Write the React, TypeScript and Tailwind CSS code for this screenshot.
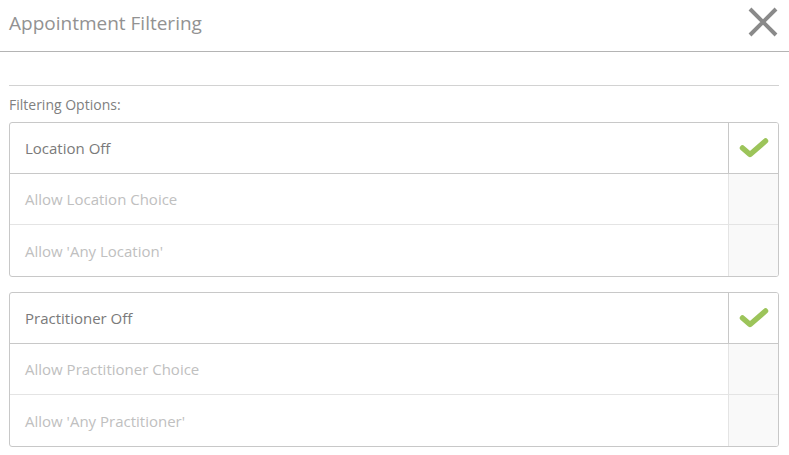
import React from 'react';

type Option = {
  label: string;
  active: boolean;
};

const groups: Option[][] = [
  [
    { label: 'Location Off', active: true },
    { label: 'Allow Location Choice', active: false },
    { label: "Allow 'Any Location'", active: false },
  ],
  [
    { label: 'Practitioner Off', active: true },
    { label: 'Allow Practitioner Choice', active: false },
    { label: "Allow 'Any Practitioner'", active: false },
  ],
];

function Check() {
  return (
    <svg width="30" height="22" viewBox="0 0 30 22">
      <path d="M3.5 11 L11 17.5 L26.5 4" fill="none" stroke="#9cc45a" strokeWidth="5.5" strokeLinecap="round" strokeLinejoin="round" />
    </svg>
  );
}

export default function App() {
  return (
    <div className="w-[789px] h-[455px] bg-white overflow-hidden" style={{ fontFamily: '"Open Sans", "Noto Sans", sans-serif' }}>
      <div className="h-[52px] flex items-center justify-between border-b border-[#b4b4b4] pl-[9px] pr-[9px]">
        <h1 className="text-[19px] text-[#929292] pb-[4px]">Appointment Filtering</h1>
        <svg width="32" height="32" viewBox="0 0 32 32" className="mb-[8px] mr-[1px]">
          <path d="M3 3 L29 29 M29 3 L3 29" stroke="#8a8a8a" strokeWidth="4" />
        </svg>
      </div>
      <div className="px-[9px] pr-[10px]">
        <div className="mt-[33px] border-t border-[#d2d2d2]" />
        <div className="mt-[9px] text-[14px] text-[#808080] leading-[20px]">Filtering Options:</div>
        <div className="mt-[7px] flex flex-col gap-[15px]">
          {groups.map((group, gi) => (
            <div key={gi} className="border border-[#c8c8c8] rounded-[3px] overflow-hidden">
              {group.map((opt, i) => (
                <div
                  key={i}
                  className={`flex ${i === 0 ? 'h-[50px]' : i === 1 ? 'h-[51px] border-t border-[#c8c8c8]' : 'h-[52px] border-t border-[#e4e4e4]'}`}
                >
                  <div className={`flex-1 flex items-center pl-[15px] pt-[1px] text-[15px] ${opt.active ? 'text-[#7a7a7a]' : 'text-[#c0c0c0]'}`}>
                    {opt.label}
                  </div>
                  <div className={`w-[50px] flex items-center justify-center border-l ${opt.active ? 'border-[#c8c8c8] bg-white' : 'border-[#e4e4e4] bg-[#f9f9f9]'}`}>
                    {opt.active && <Check />}
                  </div>
                </div>
              ))}
            </div>
          ))}
        </div>
      </div>
    </div>
  );
}
